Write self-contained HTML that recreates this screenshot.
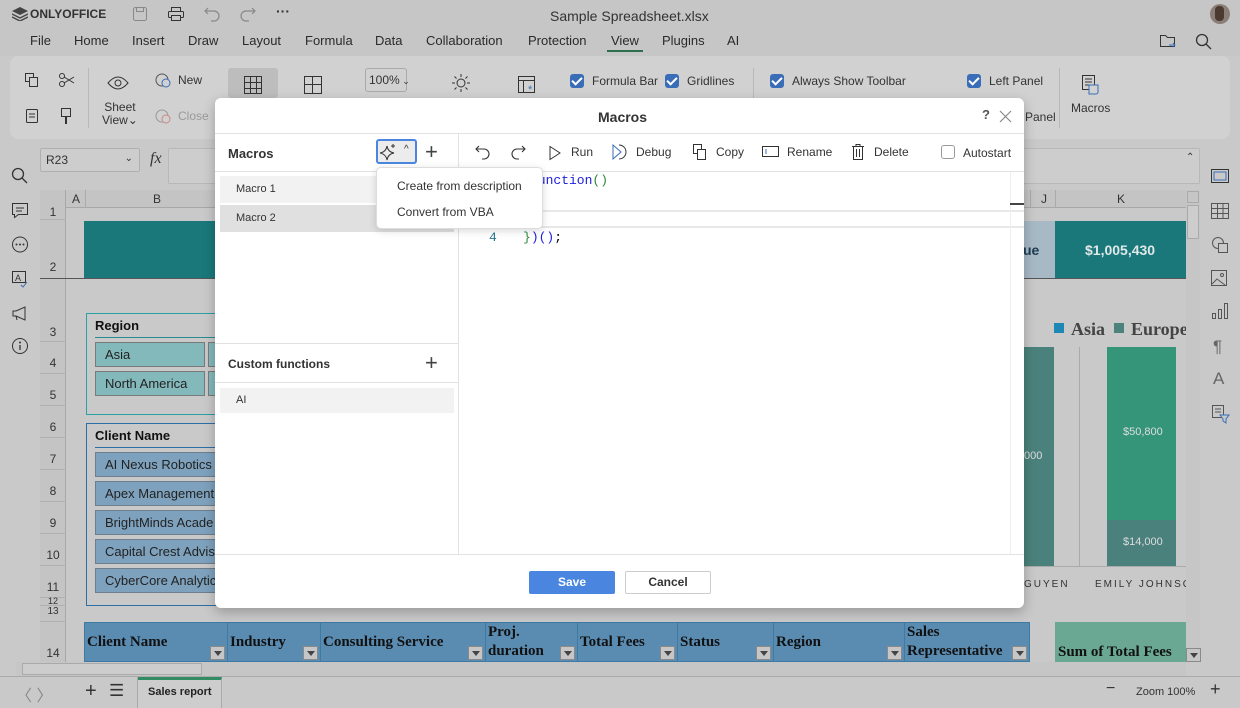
<!DOCTYPE html>
<html><head><meta charset="utf-8"><style>
*{box-sizing:border-box;margin:0;padding:0}
body{width:1240px;height:708px;overflow:hidden;background:#c9c9c9;font-family:"Liberation Sans",sans-serif;font-size:13px;color:#333;position:relative}
.a{position:absolute}
.t{position:absolute;white-space:nowrap}
.menu span{position:absolute;top:33px;font-size:13px;color:#2a2a2a}
.cb{position:absolute;width:14px;height:14px;border-radius:3px;background:#3a6db8}
.cb:after{content:"";position:absolute;left:4px;top:1px;width:4px;height:8px;border:solid #fff;border-width:0 2px 2px 0;transform:rotate(45deg)}
.rh{position:absolute;left:40px;width:26px;text-align:center;font-size:12px;color:#333;border-bottom:1px solid #b0b0b0}
.btnR{position:absolute;background:#84b9bc;border:1px solid #7a7a7a;font-size:13px;padding:4px 0 0 9px;height:25px;color:#222}
.btnC{position:absolute;background:#7ea2bd;border:1px solid #6e7e8c;font-size:13px;padding:4px 0 0 9px;height:25px;color:#222}
.th{position:absolute;top:623px;height:38px;border-right:1px solid #3f7aa5;font-family:"Liberation Serif",serif;font-weight:bold;font-size:15px;color:#111;padding:0 2px;line-height:19px}
.dd{position:absolute;right:2px;bottom:1px;width:15px;height:14px;background:#c6c6c6;border:1px solid #8a8a8a}
.dd:after{content:"";position:absolute;left:3px;top:4px;border:4px solid transparent;border-top:5px solid #444}
svg{position:absolute}
</style></head><body>

<div class="a" style="left:0;top:0;width:1240px;height:56px;background:#c6c6c6"></div>
<svg style="left:12px;top:7px" width="16" height="14" viewBox="0 0 16 14"><path d="M8 0L16 4 8 8 0 4Z" fill="#444"/><path d="M0 7l8 4 8-4M0 10l8 4 8-4" stroke="#444" fill="none" stroke-width="1.4"/></svg>
<div class="t" style="left:30px;top:7px;font-weight:bold;font-size:12px;color:#333">ONLYOFFICE</div>
<svg style="left:132px;top:6px" width="16" height="16"><rect x="1.5" y="1.5" width="13" height="13" rx="2" stroke="#888" fill="none"/><rect x="4.5" y="1.5" width="7" height="4" stroke="#888" fill="none"/></svg>
<svg style="left:167px;top:6px" width="18" height="16"><rect x="4.5" y="1.5" width="9" height="4" stroke="#333" fill="none"/><rect x="1.5" y="5.5" width="15" height="6" rx="1" stroke="#333" fill="none"/><rect x="4.5" y="9.5" width="9" height="5" stroke="#333" fill="#c6c6c6"/></svg>
<svg style="left:203px;top:6px" width="18" height="16"><path d="M5 2L2 5l3 3M2 5h9a5 5 0 010 10H8" stroke="#888" fill="none" stroke-width="1.2"/></svg>
<svg style="left:239px;top:6px" width="18" height="16"><path d="M13 2l3 3-3 3M16 5H7a5 5 0 000 10h3" stroke="#888" fill="none" stroke-width="1.2"/></svg>
<div class="t" style="left:276px;top:3px;font-size:14px;font-weight:bold;color:#333">···</div>
<div class="t" style="left:550px;top:8px;font-size:14px;color:#333">Sample Spreadsheet.xlsx</div>
<div class="a" style="left:1210px;top:4px;width:20px;height:20px;border-radius:50%;background:#8a7e76"></div>
<div class="a" style="left:1215px;top:6px;width:9px;height:15px;border-radius:4px;background:#4a3a30"></div>
<div class="menu">
<span style="left:30px">File</span><span style="left:74px">Home</span><span style="left:132px">Insert</span><span style="left:188px">Draw</span><span style="left:242px">Layout</span><span style="left:305px">Formula</span><span style="left:375px">Data</span><span style="left:426px">Collaboration</span><span style="left:528px">Protection</span><span style="left:611px">View</span><span style="left:662px">Plugins</span><span style="left:727px">AI</span>
</div>
<div class="a" style="left:607px;top:50px;width:36px;height:2px;background:#2f6e4e"></div>
<svg style="left:1159px;top:33px" width="18" height="16"><path d="M1.5 2.5h5l2 2h7v9h-14z" stroke="#333" fill="none"/><path d="M10 12h6M14 10l2 2-2 2" stroke="#3a6db8" fill="none"/></svg>
<svg style="left:1195px;top:33px" width="18" height="18"><circle cx="7" cy="7" r="5.5" stroke="#333" fill="none" stroke-width="1.3"/><path d="M11 11l5 5" stroke="#333" stroke-width="1.3"/></svg>

<div class="a" style="left:10px;top:56px;width:1220px;height:83px;background:#d1d1d1;border-radius:8px"></div>
<svg style="left:24px;top:72px" width="16" height="16"><rect x="1.5" y="1.5" width="8" height="8" stroke="#333" fill="none"/><rect x="5.5" y="5.5" width="8" height="9" stroke="#333" fill="#d1d1d1"/></svg>
<svg style="left:58px;top:72px" width="18" height="16"><circle cx="4" cy="4" r="2.5" stroke="#333" fill="none"/><circle cx="4" cy="12" r="2.5" stroke="#333" fill="none"/><path d="M6 5l10 6M6 11l10-6" stroke="#333"/></svg>
<svg style="left:25px;top:107px" width="14" height="16"><rect x="1.5" y="2.5" width="11" height="13" rx="1" stroke="#333" fill="none"/><path d="M4 7h6M4 10h6" stroke="#333"/></svg>
<svg style="left:60px;top:107px" width="12" height="18"><rect x="1.5" y="1.5" width="9" height="8" stroke="#333" fill="none"/><path d="M6 9v8" stroke="#333" stroke-width="2"/></svg>
<div class="a" style="left:88px;top:68px;width:1px;height:60px;background:#b8b8b8"></div>
<svg style="left:106px;top:74px" width="24" height="18"><path d="M2 9q10-12 20 0q-10 12-20 0z" stroke="#333" fill="none"/><circle cx="12" cy="9" r="3" stroke="#333" fill="none"/></svg>
<div class="t" style="left:102px;top:101px;font-size:12px;line-height:13px;text-align:center">Sheet<br>View⌄</div>
<svg style="left:154px;top:72px" width="18" height="16"><circle cx="8" cy="8" r="6" stroke="#555" fill="none"/><circle cx="12" cy="11" r="4" stroke="#3a6db8" fill="#d1d1d1"/></svg>
<div class="t" style="left:178px;top:73px;font-size:12px">New</div>
<svg style="left:154px;top:108px" width="18" height="16"><circle cx="8" cy="8" r="6" stroke="#999" fill="none"/><circle cx="12" cy="11" r="4" stroke="#c88" fill="#d1d1d1"/></svg>
<div class="t" style="left:178px;top:109px;font-size:12px;color:#999">Close</div>
<div class="a" style="left:228px;top:68px;width:50px;height:30px;background:#bdbdbd;border-radius:3px"></div>
<svg style="left:243px;top:75px" width="20" height="20"><path d="M1.5 1.5h17v17h-17zM7.5 1.5v17M13.5 1.5v17M1.5 7.5h17M1.5 13.5h17" stroke="#333" fill="none"/></svg>
<svg style="left:303px;top:75px" width="20" height="20"><path d="M1.5 1.5h17v17h-17zM9.5 1.5v17M1.5 9.5h17" stroke="#333" fill="none"/></svg>
<div class="a" style="left:365px;top:68px;width:42px;height:24px;border:1px solid #aaa;border-radius:3px;font-size:12px;padding:4px 0 0 3px;white-space:nowrap">100%<span style="font-size:9px"> ⌄</span></div>
<svg style="left:451px;top:73px" width="20" height="20"><circle cx="10" cy="10" r="4" stroke="#333" fill="none"/><path d="M10 1v3M10 16v3M1 10h3M16 10h3M3.5 3.5l2 2M14.5 14.5l2 2M3.5 16.5l2-2M14.5 5.5l2-2" stroke="#333"/></svg>
<svg style="left:517px;top:75px" width="20" height="20"><path d="M1.5 1.5h16v16h-16zM1.5 5.5h16M6.5 5.5v12" stroke="#333" fill="none"/><text x="11" y="18" font-size="11" fill="#3a6db8">*</text></svg>
<div class="cb" style="left:570px;top:74px"></div><div class="t" style="left:592px;top:74px;font-size:12px">Formula Bar</div>
<div class="cb" style="left:665px;top:74px"></div><div class="t" style="left:687px;top:74px;font-size:12px">Gridlines</div>
<div class="a" style="left:753px;top:68px;width:1px;height:60px;background:#b8b8b8"></div>
<div class="cb" style="left:770px;top:74px"></div><div class="t" style="left:792px;top:74px;font-size:12px">Always Show Toolbar</div>
<div class="cb" style="left:967px;top:74px"></div><div class="t" style="left:989px;top:74px;font-size:12px">Left Panel</div>
<div class="t" style="left:1025px;top:110px;font-size:12px">Panel</div>
<div class="a" style="left:1059px;top:68px;width:1px;height:60px;background:#b8b8b8"></div>
<svg style="left:1080px;top:73px" width="22" height="22"><path d="M2.5 2.5h12v14h-12zM5 6h7M5 9h7M5 12h4" stroke="#333" fill="none"/><path d="M9 12h9v7a2 2 0 01-2 2H9z" stroke="#3a6db8" fill="#d1d1d1"/></svg>
<div class="t" style="left:1071px;top:101px;font-size:12px">Macros</div>

<svg style="left:11px;top:167px" width="18" height="18"><circle cx="7" cy="7" r="5.5" stroke="#333" fill="none" stroke-width="1.3"/><path d="M11 11l5 5" stroke="#333" stroke-width="1.3"/></svg>
<svg style="left:11px;top:202px" width="18" height="18"><path d="M1.5 1.5h15v11h-9l-4 3v-3h-2z" stroke="#333" fill="none"/><path d="M5 6h8M5 9h6" stroke="#333"/></svg>
<svg style="left:11px;top:236px" width="18" height="18"><circle cx="9" cy="8.5" r="7.5" stroke="#333" fill="none"/><circle cx="5.5" cy="8.5" r="1" fill="#333"/><circle cx="9" cy="8.5" r="1" fill="#333"/><circle cx="12.5" cy="8.5" r="1" fill="#333"/></svg>
<svg style="left:11px;top:270px" width="18" height="18"><path d="M1.5 1.5h13v11h-13z" stroke="#333" fill="none"/><text x="4" y="11" font-size="9" fill="#333">A</text><path d="M10 15l2 2 4-5" stroke="#3a6db8" fill="none"/></svg>
<svg style="left:11px;top:304px" width="18" height="18"><path d="M2 7v5h3l9 4V3L5 7z M5 12l1 4" stroke="#333" fill="none"/></svg>
<svg style="left:11px;top:337px" width="18" height="18"><circle cx="9" cy="9" r="7.5" stroke="#333" fill="none"/><path d="M9 8v5" stroke="#333" stroke-width="1.3"/><circle cx="9" cy="5.5" r="1" fill="#333"/></svg>

<div class="a" style="left:40px;top:148px;width:100px;height:24px;border:1px solid #b0b0b0;background:#cdcdcd;border-radius:2px;font-size:12px;padding:4px 5px">R23<span style="position:absolute;right:6px;font-size:10px">⌄</span></div>
<div class="t" style="left:150px;top:150px;font-family:'Liberation Serif',serif;font-style:italic;font-size:16px">fx</div>
<div class="a" style="left:168px;top:148px;width:1032px;height:36px;border:1px solid #b8b8b8;background:#cdcdcd;border-radius:2px"></div>
<div class="t" style="left:1186px;top:152px;font-size:10px">⌃</div>

<div class="a" style="left:40px;top:190px;width:1146px;height:18px;background:#c4c4c4;border-bottom:1px solid #a8a8a8"></div>
<div class="t" style="left:72px;top:192px;font-size:12px">A</div><div class="t" style="left:153px;top:192px;font-size:12px">B</div>
<div class="t" style="left:1041px;top:192px;font-size:12px">J</div><div class="t" style="left:1117px;top:192px;font-size:12px">K</div>
<div class="a" style="left:1030px;top:190px;width:1px;height:18px;background:#aaa"></div>
<div class="a" style="left:1055px;top:190px;width:1px;height:18px;background:#aaa"></div>
<div class="a" style="left:40px;top:190px;width:26px;height:472px;background:#c4c4c4;border-right:1px solid #a8a8a8"></div>
<div class="a" style="left:66px;top:190px;width:20px;height:18px;border-right:1px solid #aaa"></div>
<div class="rh" style="top:207px;height:13px;line-height:10px">1</div>
<div class="rh" style="top:220px;height:59px;padding-top:40px">2</div>
<div class="a" style="left:40px;top:278px;width:1146px;height:1px;background:#555"></div>
<div class="rh" style="top:279px;height:63px;padding-top:46px">3</div>
<div class="rh" style="top:342px;height:32px;padding-top:14px">4</div>
<div class="rh" style="top:374px;height:32px;padding-top:14px">5</div>
<div class="rh" style="top:406px;height:32px;padding-top:14px">6</div>
<div class="rh" style="top:438px;height:32px;padding-top:14px">7</div>
<div class="rh" style="top:470px;height:32px;padding-top:14px">8</div>
<div class="rh" style="top:502px;height:32px;padding-top:14px">9</div>
<div class="rh" style="top:534px;height:32px;padding-top:14px">10</div>
<div class="rh" style="top:566px;height:32px;padding-top:14px">11</div>
<div class="rh" style="top:598px;height:8px;font-size:9px;line-height:6px">12</div>
<div class="rh" style="top:606px;height:16px;font-size:10px">13</div>
<div class="rh" style="top:622px;height:40px;padding-top:24px;border:0">14</div>

<div class="a" style="left:84px;top:221px;width:1102px;height:57px;background:#1a787b"></div>
<div class="a" style="left:1015px;top:221px;width:40px;height:57px;background:#a8b9c6"></div>
<div class="t" style="left:1023px;top:242px;font-weight:bold;font-size:14px;color:#1d3b52">ue</div>
<div class="t" style="left:1085px;top:242px;font-weight:bold;font-size:14px;color:#e0e8e8">$1,005,430</div>

<div class="a" style="left:86px;top:313px;width:140px;height:102px;border:1px solid #2ba0a5"></div>
<div class="t" style="left:95px;top:318px;font-weight:bold;font-size:13px;color:#111">Region</div>
<div class="a" style="left:95px;top:337px;width:130px;height:1px;background:#2a8a90"></div>
<div class="btnR" style="left:95px;top:342px;width:110px">Asia</div><div class="btnR" style="left:208px;top:342px;width:20px"></div>
<div class="btnR" style="left:95px;top:371px;width:110px">North America</div><div class="btnR" style="left:208px;top:371px;width:20px"></div>
<div class="a" style="left:86px;top:423px;width:140px;height:183px;border:1px solid #2d6ea5"></div>
<div class="t" style="left:95px;top:428px;font-weight:bold;font-size:13px;color:#111">Client Name</div>
<div class="a" style="left:95px;top:447px;width:130px;height:1px;background:#2d6ea5"></div>
<div class="btnC" style="left:95px;top:452px;width:135px">AI Nexus Robotics</div>
<div class="btnC" style="left:95px;top:481px;width:135px">Apex Management</div>
<div class="btnC" style="left:95px;top:510px;width:135px">BrightMinds Acade</div>
<div class="btnC" style="left:95px;top:539px;width:135px">Capital Crest Advis</div>
<div class="btnC" style="left:95px;top:568px;width:135px">CyberCore Analytic</div>

<div class="a" style="left:1054px;top:323px;width:10px;height:10px;background:#1f87b5"></div>
<div class="t" style="left:1071px;top:319px;font-family:'Liberation Serif',serif;font-weight:bold;font-size:18px;color:#444">Asia</div>
<div class="a" style="left:1114px;top:323px;width:10px;height:10px;background:#4c827d"></div>
<div class="t" style="left:1131px;top:319px;font-family:'Liberation Serif',serif;font-weight:bold;font-size:18px;color:#444">Europe</div>
<div class="a" style="left:1024px;top:347px;width:30px;height:219px;background:#4b817c"></div>
<div class="t" style="left:1024px;top:450px;font-size:11px;color:#ddd">000</div>
<div class="a" style="left:1079px;top:347px;width:1px;height:219px;background:#aaa"></div>
<div class="a" style="left:1107px;top:347px;width:69px;height:173px;background:#359579"></div>
<div class="a" style="left:1107px;top:520px;width:69px;height:46px;background:#4b817c"></div>
<div class="t" style="left:1123px;top:426px;font-size:11px;color:#ddd">$50,800</div>
<div class="t" style="left:1123px;top:536px;font-size:11px;color:#ddd">$14,000</div>
<div class="a" style="left:1024px;top:566px;width:162px;height:1px;background:#aaa"></div>
<div class="t" style="left:1024px;top:579px;font-size:10px;letter-spacing:2px;color:#333">GUYEN</div>
<div class="t" style="left:1095px;top:579px;font-size:10px;letter-spacing:2px;color:#333">EMILY JOHNSON</div>
<div class="a" style="left:1186px;top:190px;width:14px;height:472px;background:#c6c6c6"></div>
<div class="a" style="left:1187px;top:191px;width:12px;height:12px;border:1px solid #aaa"></div>
<div class="a" style="left:1187px;top:205px;width:12px;height:34px;border:1px solid #aaa;background:#cdcdcd"></div>

<div class="a" style="left:84px;top:622px;width:946px;height:40px;background:#5a8cb2;border:1px solid #3f7aa5"></div>
<div class="th" style="left:85px;width:143px;padding-top:10px">Client Name<div class="dd"></div></div>
<div class="th" style="left:228px;width:93px;padding-top:10px">Industry<div class="dd"></div></div>
<div class="th" style="left:321px;width:165px;padding-top:10px">Consulting Service<div class="dd"></div></div>
<div class="th" style="left:486px;width:92px">Proj.<br>duration<div class="dd"></div></div>
<div class="th" style="left:578px;width:100px;padding-top:10px">Total Fees<div class="dd"></div></div>
<div class="th" style="left:678px;width:96px;padding-top:10px">Status<div class="dd"></div></div>
<div class="th" style="left:774px;width:131px;padding-top:10px">Region<div class="dd"></div></div>
<div class="th" style="left:905px;width:124px;border:0">Sales<br>Representative<div class="dd"></div></div>
<div class="a" style="left:1055px;top:622px;width:131px;height:40px;background:#6aa894"></div>
<div class="t" style="left:1058px;top:644px;font-family:'Liberation Serif',serif;font-weight:bold;font-size:15px;color:#111">Sum of Total Fees</div>
<div class="dd" style="left:1186px;top:648px;right:auto;bottom:auto"></div>

<div class="a" style="left:16px;top:662px;width:1170px;height:14px;background:#c6c6c6"></div>
<div class="a" style="left:22px;top:663px;width:180px;height:12px;border:1px solid #aaa;background:#cdcdcd"></div>
<div class="a" style="left:0;top:676px;width:1240px;height:32px;background:#c9c9c9;border-top:1px solid #aaa"></div>
<div class="t" style="left:16px;top:682px;font-size:16px;color:#888">〈 〉</div>
<div class="t" style="left:85px;top:680px;font-size:20px;color:#333">+</div>
<div class="t" style="left:109px;top:681px;font-size:17px;color:#333">☰</div>
<div class="a" style="left:137px;top:677px;width:1px;height:31px;background:#aaa"></div>
<div class="a" style="left:138px;top:677px;width:84px;height:31px;background:#cdcdcd;border-right:1px solid #aaa;border-top:3px solid #318b63"></div>
<div class="t" style="left:148px;top:686px;font-size:11px;font-weight:bold;color:#222">Sales report</div>
<div class="t" style="left:1106px;top:680px;font-size:16px">−</div>
<div class="t" style="left:1136px;top:686px;font-size:11px">Zoom 100%</div>
<div class="t" style="left:1210px;top:679px;font-size:18px">+</div>

<svg style="left:1211px;top:169px" width="18" height="14"><rect x="0.5" y="0.5" width="17" height="13" stroke="#333" fill="none"/><rect x="3" y="3" width="12" height="8" stroke="#3a6db8" fill="none"/></svg>
<svg style="left:1211px;top:203px" width="18" height="16"><path d="M.5 .5h17v15H.5zM.5 5.5h17M.5 10.5h17M6.5 .5v15M12 .5v15" stroke="#555" fill="none"/></svg>
<svg style="left:1211px;top:236px" width="18" height="18"><circle cx="7" cy="7" r="5.5" stroke="#555" fill="none"/><rect x="7.5" y="7.5" width="9" height="9" stroke="#555" fill="#c9c9c9"/></svg>
<svg style="left:1211px;top:270px" width="18" height="18"><rect x=".5" y=".5" width="15" height="15" stroke="#555" fill="none"/><path d="M1 14l5-5 8 6" stroke="#555" fill="none"/><circle cx="11" cy="5" r="1.5" stroke="#555" fill="none"/></svg>
<svg style="left:1211px;top:302px" width="18" height="18"><path d="M1.5 11.5h3v5h-3zM7.5 7.5h3v9h-3zM13.5 1.5h3v15h-3z" stroke="#555" fill="none"/></svg>
<div class="t" style="left:1213px;top:337px;font-size:17px;color:#666">¶</div>
<div class="t" style="left:1213px;top:369px;font-size:17px;color:#666">A</div>
<svg style="left:1211px;top:404px" width="20" height="20"><path d="M1.5 1.5h11v12h-11zM4 5h6M4 8h6" stroke="#555" fill="none"/><path d="M9 11h9l-3 4v4l-3-2v-2z" stroke="#3a6db8" fill="#c9c9c9"/></svg>

<div class="a" style="left:215px;top:98px;width:809px;height:510px;background:#fff;border-radius:6px;box-shadow:0 4px 12px rgba(0,0,0,.25)"></div>
<div class="t" style="left:598px;top:109px;font-weight:bold;font-size:14px;color:#333">Macros</div>
<div class="t" style="left:982px;top:107px;font-weight:bold;font-size:13px;color:#555">?</div>
<svg style="left:999px;top:110px" width="13" height="13"><path d="M1 1l11 11M12 1L1 12" stroke="#888" stroke-width="1.2"/></svg>
<div class="a" style="left:215px;top:133px;width:809px;height:1px;background:#e2e2e2"></div>
<div class="a" style="left:458px;top:134px;width:1px;height:420px;background:#e2e2e2"></div>
<div class="a" style="left:215px;top:171px;width:809px;height:1px;background:#e2e2e2"></div>
<div class="t" style="left:228px;top:146px;font-weight:bold;font-size:13px;color:#333">Macros</div>
<div class="a" style="left:376px;top:139px;width:41px;height:25px;border:2px solid #4a86e0;border-radius:3px;background:#ececec"></div>
<svg style="left:379px;top:143px" width="18" height="18"><path d="M8 3q1 6 7 7q-6 1-7 7q-1-6-7-7q6-1 7-7z" stroke="#333" fill="none"/><path d="M14 1v4M12 3h4" stroke="#333"/></svg>
<div class="t" style="left:404px;top:144px;font-size:10px">^</div>
<div class="t" style="left:425px;top:139px;font-size:22px;font-weight:300;color:#444">+</div>

<svg style="left:474px;top:144px" width="18" height="18"><path d="M5 2L2 5l3 3M2 5h8a5 5 0 010 10H8" stroke="#333" fill="none" stroke-width="1.1"/></svg>
<svg style="left:509px;top:144px" width="18" height="18"><path d="M13 2l3 3-3 3M16 5H8a5 5 0 000 10h2" stroke="#333" fill="none" stroke-width="1.1"/></svg>
<svg style="left:548px;top:145px" width="14" height="16"><path d="M2 1.5l10 6.5-10 6.5z" stroke="#333" fill="none"/></svg>
<div class="t" style="left:571px;top:145px;font-size:12px">Run</div>
<svg style="left:611px;top:143px" width="18" height="18"><path d="M2 2l8 7-8 7z" stroke="#3a6db8" fill="none"/><path d="M8 2a7 7 0 010 14" stroke="#333" fill="none"/></svg>
<div class="t" style="left:636px;top:145px;font-size:12px">Debug</div>
<svg style="left:692px;top:143px" width="16" height="18"><rect x="1.5" y="1.5" width="8" height="9" stroke="#333" fill="none"/><rect x="5.5" y="6.5" width="8" height="10" stroke="#333" fill="#fff"/></svg>
<div class="t" style="left:716px;top:145px;font-size:12px">Copy</div>
<svg style="left:762px;top:146px" width="18" height="12"><rect x=".5" y=".5" width="16" height="10" stroke="#333" fill="none"/><path d="M4 3v5" stroke="#3a6db8"/></svg>
<div class="t" style="left:787px;top:145px;font-size:12px">Rename</div>
<svg style="left:851px;top:143px" width="14" height="18"><path d="M1 3.5h12M5 3.5v-2h4v2M2.5 3.5v13h9v-13M5.5 6v8M8.5 6v8" stroke="#333" fill="none"/></svg>
<div class="t" style="left:874px;top:145px;font-size:12px">Delete</div>
<div class="a" style="left:941px;top:145px;width:14px;height:14px;border:1px solid #999;border-radius:3px"></div>
<div class="t" style="left:963px;top:146px;font-size:12px">Autostart</div>

<div class="a" style="left:220px;top:176px;width:234px;height:27px;background:#f2f2f2"></div>
<div class="t" style="left:236px;top:183px;font-size:11px">Macro 1</div>
<div class="a" style="left:220px;top:205px;width:234px;height:27px;background:#e0e0e0"></div>
<div class="t" style="left:236px;top:212px;font-size:11px">Macro 2</div>
<div class="a" style="left:215px;top:343px;width:243px;height:1px;background:#e2e2e2"></div>
<div class="t" style="left:228px;top:357px;font-weight:bold;font-size:12px">Custom functions</div>
<div class="t" style="left:425px;top:350px;font-size:22px;font-weight:300;color:#444">+</div>
<div class="a" style="left:215px;top:382px;width:243px;height:1px;background:#e2e2e2"></div>
<div class="a" style="left:220px;top:388px;width:234px;height:25px;background:#f2f2f2"></div>
<div class="t" style="left:236px;top:394px;font-size:11px">AI</div>

<div class="a" style="left:459px;top:210px;width:565px;height:18px;border-top:2px solid #e8e8e8;border-bottom:2px solid #e8e8e8"></div>
<div class="a" style="left:1010px;top:172px;width:1px;height:382px;background:#eee"></div>
<div class="a" style="left:1010px;top:203px;width:14px;height:2px;background:#444"></div>
<div class="t" style="left:530px;top:173px;font-family:'Liberation Mono',monospace;font-size:13px;color:#2020e0">function<span style="color:#2a8a3a">()</span></div>
<div class="t" style="left:489px;top:230px;font-family:'Liberation Mono',monospace;font-size:13px;color:#237893">4</div>
<div class="t" style="left:523px;top:230px;font-family:'Liberation Mono',monospace;font-size:13px;color:#2a8a3a">}<span style="color:#2020e0">)()</span><span style="color:#000">;</span></div>

<div class="a" style="left:376px;top:167px;width:167px;height:62px;background:#fff;border:1px solid #ddd;border-radius:5px;box-shadow:0 2px 8px rgba(0,0,0,.15)"></div>
<div class="t" style="left:397px;top:179px;font-size:12px;color:#333">Create from description</div>
<div class="t" style="left:397px;top:205px;font-size:12px;color:#333">Convert from VBA</div>

<div class="a" style="left:215px;top:554px;width:809px;height:1px;background:#e2e2e2"></div>
<div class="a" style="left:529px;top:571px;width:86px;height:23px;background:#4a86e0;border-radius:2px;color:#fff;font-weight:bold;font-size:12px;text-align:center;line-height:23px">Save</div>
<div class="a" style="left:625px;top:571px;width:86px;height:23px;border:1px solid #ccc;border-radius:2px;font-weight:bold;font-size:12px;text-align:center;line-height:21px">Cancel</div>
</body></html>
